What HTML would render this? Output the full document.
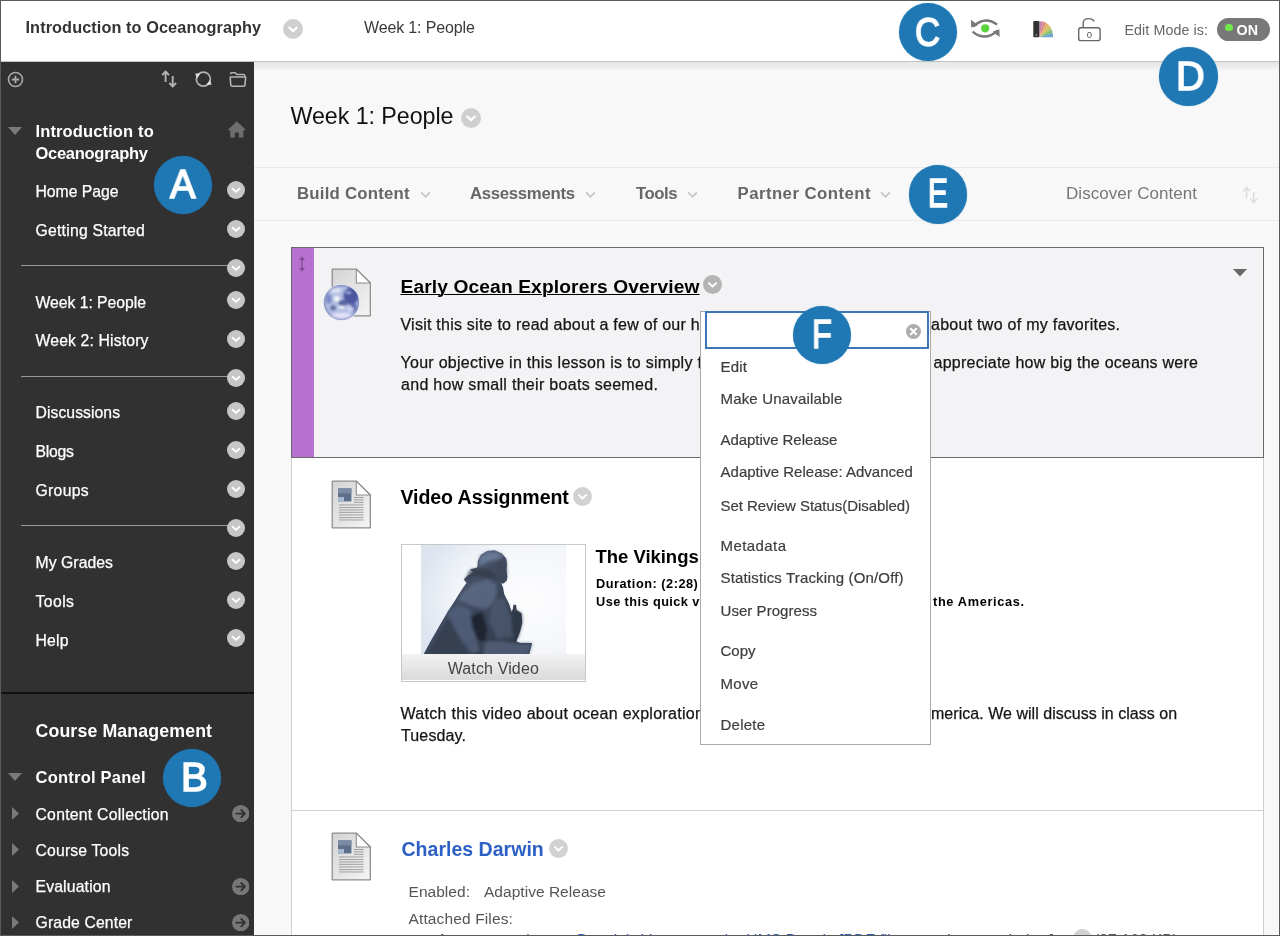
<!DOCTYPE html>
<html><head><meta charset="utf-8"><title>Week 1: People</title>
<style>
html,body{margin:0;padding:0;}
body{width:1280px;height:936px;position:relative;overflow:hidden;background:#f8f8f8;font-family:"Liberation Sans",sans-serif;}
.t{position:absolute;white-space:nowrap;line-height:1;z-index:1;}
#tx,#mx{position:absolute;left:0;top:0;width:1280px;height:936px;will-change:transform;}
#mx{z-index:6;}
.a{position:absolute;}
.chev{position:absolute;width:18px;height:18px;border-radius:50%;background:#c9c9c9;z-index:2;}
.chev svg,.arr svg{position:absolute;left:0;top:0;}
.arr{position:absolute;width:17px;height:17px;border-radius:50%;background:#777;z-index:2;}
.dot{position:absolute;width:58.4px;height:58.4px;border-radius:50%;background:#1f78b4;box-shadow:0 0 1.2px 0 rgba(31,120,180,.6);z-index:10;}
.dl{position:absolute;z-index:11;color:#fff;line-height:1;transform-origin:0 0;will-change:transform;}
</style></head><body>
<!-- top bar -->
<div class="a" style="left:0;top:0;width:1280px;height:61px;background:#fff;border-bottom:1px solid #c4c4c4;"></div>
<div class="a" style="left:254px;top:62px;width:1026px;height:8px;background:linear-gradient(#e6e6e6,#efefef 80%,#f8f8f8);"></div>
<!-- sidebar -->
<div class="a" style="left:0;top:62px;width:254px;height:874px;background:#323132;"></div>
<div class="a" style="left:0;top:692px;width:254px;height:2px;background:#111;"></div>
<div class="a" style="left:21px;top:265px;width:208px;height:1px;background:#9a9a9a;"></div>
<div class="a" style="left:21px;top:376px;width:208px;height:1px;background:#9a9a9a;"></div>
<div class="a" style="left:21px;top:525px;width:208px;height:1px;background:#9a9a9a;"></div>
<!-- action bar -->
<div class="a" style="left:254px;top:167px;width:1026px;height:1px;background:#e9e9e9;"></div>
<div class="a" style="left:254px;top:220px;width:1026px;height:1px;background:#e9e9e9;"></div>
<!-- content list -->
<div class="a" style="left:291px;top:458px;width:971px;height:478px;background:#fff;border-left:1px solid #cfcfcf;border-right:1px solid #cfcfcf;"></div>
<div class="a" style="left:292px;top:810px;width:971px;height:1px;background:#d0d0d0;"></div>
<div class="a" style="left:291px;top:247px;width:971px;height:209px;background:#f3f2f4;border:1px solid #6a6a6a;"></div>
<div class="a" style="left:292px;top:248px;width:22px;height:209px;background:#b770d0;"></div>
<!-- video box -->
<div class="a" style="left:401.3px;top:543.5px;width:182.4px;height:136px;background:#fff;border:1px solid #c8c8c8;"></div>
<div class="a" style="left:402.3px;top:653.8px;width:182.4px;height:26.7px;background:linear-gradient(#f2f2f2,#dadada);"></div>
<!-- menu -->
<div class="a" style="left:700px;top:311px;width:229px;height:432px;background:#fff;border:1px solid #a9a9a9;z-index:5;"></div>
<div class="a" style="left:705px;top:311.4px;width:219.5px;height:33.2px;border:2px solid #3d76b8;z-index:6;background:#fff;"></div>
<svg class="a" style="left:226.7px;top:180.6px;z-index:2" width="18" height="18" viewBox="0 0 18 18"><circle cx="9" cy="9" r="9" fill="#c6c6c6"/><path d="M5.6 7.7 L9 10.9 L12.4 7.7" fill="none" stroke="#fff" stroke-width="1.9" stroke-linecap="round" stroke-linejoin="round"/></svg>
<svg class="a" style="left:226.7px;top:219.6px;z-index:2" width="18" height="18" viewBox="0 0 18 18"><circle cx="9" cy="9" r="9" fill="#c6c6c6"/><path d="M5.6 7.7 L9 10.9 L12.4 7.7" fill="none" stroke="#fff" stroke-width="1.9" stroke-linecap="round" stroke-linejoin="round"/></svg>
<svg class="a" style="left:226.7px;top:258.5px;z-index:2" width="18" height="18" viewBox="0 0 18 18"><circle cx="9" cy="9" r="9" fill="#c6c6c6"/><path d="M5.6 7.7 L9 10.9 L12.4 7.7" fill="none" stroke="#fff" stroke-width="1.9" stroke-linecap="round" stroke-linejoin="round"/></svg>
<svg class="a" style="left:226.7px;top:291.0px;z-index:2" width="18" height="18" viewBox="0 0 18 18"><circle cx="9" cy="9" r="9" fill="#c6c6c6"/><path d="M5.6 7.7 L9 10.9 L12.4 7.7" fill="none" stroke="#fff" stroke-width="1.9" stroke-linecap="round" stroke-linejoin="round"/></svg>
<svg class="a" style="left:226.7px;top:330.0px;z-index:2" width="18" height="18" viewBox="0 0 18 18"><circle cx="9" cy="9" r="9" fill="#c6c6c6"/><path d="M5.6 7.7 L9 10.9 L12.4 7.7" fill="none" stroke="#fff" stroke-width="1.9" stroke-linecap="round" stroke-linejoin="round"/></svg>
<svg class="a" style="left:226.7px;top:369.0px;z-index:2" width="18" height="18" viewBox="0 0 18 18"><circle cx="9" cy="9" r="9" fill="#c6c6c6"/><path d="M5.6 7.7 L9 10.9 L12.4 7.7" fill="none" stroke="#fff" stroke-width="1.9" stroke-linecap="round" stroke-linejoin="round"/></svg>
<svg class="a" style="left:226.7px;top:402.0px;z-index:2" width="18" height="18" viewBox="0 0 18 18"><circle cx="9" cy="9" r="9" fill="#c6c6c6"/><path d="M5.6 7.7 L9 10.9 L12.4 7.7" fill="none" stroke="#fff" stroke-width="1.9" stroke-linecap="round" stroke-linejoin="round"/></svg>
<svg class="a" style="left:226.7px;top:441.0px;z-index:2" width="18" height="18" viewBox="0 0 18 18"><circle cx="9" cy="9" r="9" fill="#c6c6c6"/><path d="M5.6 7.7 L9 10.9 L12.4 7.7" fill="none" stroke="#fff" stroke-width="1.9" stroke-linecap="round" stroke-linejoin="round"/></svg>
<svg class="a" style="left:226.7px;top:479.7px;z-index:2" width="18" height="18" viewBox="0 0 18 18"><circle cx="9" cy="9" r="9" fill="#c6c6c6"/><path d="M5.6 7.7 L9 10.9 L12.4 7.7" fill="none" stroke="#fff" stroke-width="1.9" stroke-linecap="round" stroke-linejoin="round"/></svg>
<svg class="a" style="left:226.7px;top:518.5px;z-index:2" width="18" height="18" viewBox="0 0 18 18"><circle cx="9" cy="9" r="9" fill="#c6c6c6"/><path d="M5.6 7.7 L9 10.9 L12.4 7.7" fill="none" stroke="#fff" stroke-width="1.9" stroke-linecap="round" stroke-linejoin="round"/></svg>
<svg class="a" style="left:226.7px;top:551.5px;z-index:2" width="18" height="18" viewBox="0 0 18 18"><circle cx="9" cy="9" r="9" fill="#c6c6c6"/><path d="M5.6 7.7 L9 10.9 L12.4 7.7" fill="none" stroke="#fff" stroke-width="1.9" stroke-linecap="round" stroke-linejoin="round"/></svg>
<svg class="a" style="left:226.7px;top:590.5px;z-index:2" width="18" height="18" viewBox="0 0 18 18"><circle cx="9" cy="9" r="9" fill="#c6c6c6"/><path d="M5.6 7.7 L9 10.9 L12.4 7.7" fill="none" stroke="#fff" stroke-width="1.9" stroke-linecap="round" stroke-linejoin="round"/></svg>
<svg class="a" style="left:226.7px;top:629.3px;z-index:2" width="18" height="18" viewBox="0 0 18 18"><circle cx="9" cy="9" r="9" fill="#c6c6c6"/><path d="M5.6 7.7 L9 10.9 L12.4 7.7" fill="none" stroke="#fff" stroke-width="1.9" stroke-linecap="round" stroke-linejoin="round"/></svg>
<svg class="a" style="left:283.0px;top:19.0px;z-index:2" width="20" height="20" viewBox="0 0 18 18"><circle cx="9" cy="9" r="9" fill="#cfcfcf"/><path d="M5.6 7.7 L9 10.9 L12.4 7.7" fill="none" stroke="#fff" stroke-width="1.9" stroke-linecap="round" stroke-linejoin="round"/></svg>
<svg class="a" style="left:460.5px;top:107.8px;z-index:2" width="20" height="20" viewBox="0 0 18 18"><circle cx="9" cy="9" r="9" fill="#cfcfcf"/><path d="M5.6 7.7 L9 10.9 L12.4 7.7" fill="none" stroke="#fff" stroke-width="1.9" stroke-linecap="round" stroke-linejoin="round"/></svg>
<svg class="a" style="left:702.9px;top:275.2px;z-index:2" width="19.0" height="19.0" viewBox="0 0 18 18"><circle cx="9" cy="9" r="9" fill="#b4b4b4"/><path d="M5.6 7.7 L9 10.9 L12.4 7.7" fill="none" stroke="#fff" stroke-width="1.9" stroke-linecap="round" stroke-linejoin="round"/></svg>
<svg class="a" style="left:572.9px;top:486.5px;z-index:2" width="19.0" height="19.0" viewBox="0 0 18 18"><circle cx="9" cy="9" r="9" fill="#d2d2d2"/><path d="M5.6 7.7 L9 10.9 L12.4 7.7" fill="none" stroke="#fff" stroke-width="1.9" stroke-linecap="round" stroke-linejoin="round"/></svg>
<svg class="a" style="left:548.5px;top:839.0px;z-index:2" width="19.0" height="19.0" viewBox="0 0 18 18"><circle cx="9" cy="9" r="9" fill="#d2d2d2"/><path d="M5.6 7.7 L9 10.9 L12.4 7.7" fill="none" stroke="#fff" stroke-width="1.9" stroke-linecap="round" stroke-linejoin="round"/></svg>
<svg class="a" style="left:1072.5px;top:928.5px;z-index:2" width="19.0" height="19.0" viewBox="0 0 18 18"><circle cx="9" cy="9" r="9" fill="#d2d2d2"/><path d="M5.6 7.7 L9 10.9 L12.4 7.7" fill="none" stroke="#fff" stroke-width="1.9" stroke-linecap="round" stroke-linejoin="round"/></svg>
<svg class="a" style="left:231.9px;top:804.8px;z-index:2" width="17.4" height="17.4" viewBox="0 0 18 18"><circle cx="9" cy="9" r="9" fill="#777"/><path d="M4.5 9 H13 M9.6 5.2 L13.4 9 L9.6 12.8" fill="none" stroke="#323132" stroke-width="1.9" stroke-linecap="round" stroke-linejoin="round"/></svg>
<svg class="a" style="left:231.9px;top:877.8px;z-index:2" width="17.4" height="17.4" viewBox="0 0 18 18"><circle cx="9" cy="9" r="9" fill="#777"/><path d="M4.5 9 H13 M9.6 5.2 L13.4 9 L9.6 12.8" fill="none" stroke="#323132" stroke-width="1.9" stroke-linecap="round" stroke-linejoin="round"/></svg>
<svg class="a" style="left:231.9px;top:913.9px;z-index:2" width="17.4" height="17.4" viewBox="0 0 18 18"><circle cx="9" cy="9" r="9" fill="#777"/><path d="M4.5 9 H13 M9.6 5.2 L13.4 9 L9.6 12.8" fill="none" stroke="#323132" stroke-width="1.9" stroke-linecap="round" stroke-linejoin="round"/></svg>
<svg class="a" style="left:8px;top:127px" width="14" height="8" viewBox="0 0 14 8"><path d="M0 0 H14 L7.0 8 Z" fill="#7a7a7a"/></svg>
<svg class="a" style="left:8px;top:773px" width="14" height="8" viewBox="0 0 14 8"><path d="M0 0 H14 L7.0 8 Z" fill="#7a7a7a"/></svg>
<svg class="a" style="left:12px;top:806.8px" width="7" height="13" viewBox="0 0 7 13"><path d="M0 0 L7 6.5 L0 13 Z" fill="#7a7a7a"/></svg>
<svg class="a" style="left:12px;top:843.0px" width="7" height="13" viewBox="0 0 7 13"><path d="M0 0 L7 6.5 L0 13 Z" fill="#7a7a7a"/></svg>
<svg class="a" style="left:12px;top:879.5px" width="7" height="13" viewBox="0 0 7 13"><path d="M0 0 L7 6.5 L0 13 Z" fill="#7a7a7a"/></svg>
<svg class="a" style="left:12px;top:915.8px" width="7" height="13" viewBox="0 0 7 13"><path d="M0 0 L7 6.5 L0 13 Z" fill="#7a7a7a"/></svg>
<svg class="a" style="left:226.6px;top:120.2px" width="19.6" height="18.6" viewBox="0 0 21 19"><path d="M10.5 1 L20.5 10.5 H17.5 V18.4 H12.6 V13 H8.4 V18.4 H3.5 V10.5 H0.5 Z" fill="#6e6e6e"/></svg>
<svg class="a" style="left:7px;top:70.5px" width="17" height="17" viewBox="0 0 17 17"><circle cx="8.5" cy="8.5" r="7" fill="none" stroke="#a9a9a9" stroke-width="1.6"/><path d="M8.5 4.8 V12.2 M4.8 8.5 H12.2" stroke="#a9a9a9" stroke-width="1.8"/></svg>
<svg class="a" style="left:160.6px;top:69.5px" width="17" height="18" viewBox="0 0 17 18"><path d="M4.6 12 V2.2 M1.2 5.2 L4.6 1.4 L8 5.2" fill="none" stroke="#b4b4b4" stroke-width="1.9" stroke-linejoin="round"/><path d="M11.7 6 V15.8 M8.3 12.8 L11.7 16.6 L15.1 12.8" fill="none" stroke="#b4b4b4" stroke-width="1.9" stroke-linejoin="round"/></svg>
<svg class="a" style="left:194px;top:70px" width="19" height="19" viewBox="0 0 19 19"><circle cx="9.4" cy="9.2" r="7" fill="none" stroke="#b4b4b4" stroke-width="1.7"/><path d="M1.2 3.6 L6.4 3.6 L3 8.4 Z M17.6 14.8 L12.4 14.8 L15.8 10 Z" fill="#e0e0e0"/></svg>
<svg class="a" style="left:229px;top:71px" width="18" height="17" viewBox="0 0 18 17"><path d="M1.5 3.2 Q1.5 1.8 2.8 1.8 H6.2 L7.8 3.6 H14.5 Q15.8 3.6 15.8 4.9 V6" fill="none" stroke="#b4b4b4" stroke-width="1.5"/><path d="M1.6 6 H16.2 Q16.8 6 16.7 6.7 L15.9 14.2 Q15.8 15.3 14.7 15.3 H3 Q1.9 15.3 1.8 14.2 L1.2 6.7 Q1.1 6 1.6 6 Z" fill="none" stroke="#b4b4b4" stroke-width="1.6"/></svg>
<svg class="a" style="left:970px;top:17px" width="31" height="23" viewBox="0 0 31 23"><path d="M3.2 9.5 Q15 -1.5 27.2 7.6" fill="none" stroke="#777" stroke-width="2.4"/><path d="M1 2.8 L1.2 10.6 L8 8.2 Z" fill="#777"/><path d="M2.6 14.6 Q15 25 27.6 13.6" fill="none" stroke="#777" stroke-width="2.4"/><path d="M29.6 20 L29.4 12.2 L22.6 14.8 Z" fill="#777"/><circle cx="15.2" cy="11.3" r="4.1" fill="#5bd23f"/></svg>
<svg class="a" style="left:1032px;top:20px" width="21" height="19" viewBox="0 0 21 19"><g transform="translate(1.3,17.2)"><path d="M6 0 L6 -16 A16 16 0 0 1 9.5 -15.6 Z" fill="#c77fb0"/><path d="M6 0 L9.5 -15.6 A16 16 0 0 1 13 -14.2 Z" fill="#d98a8a"/><path d="M6 0 L13 -14.2 A16 16 0 0 1 16 -11.6 Z" fill="#e8b266"/><path d="M6 0 L16 -11.6 A16 16 0 0 1 18.2 -8 Z" fill="#c9c46a"/><path d="M6 0 L18.2 -8 A16 16 0 0 1 19.4 -4 Z" fill="#7fbf7b"/><path d="M6 0 L19.4 -4 A16 16 0 0 1 19.8 0 Z" fill="#6aa7d8"/><rect x="0" y="-16.2" width="6" height="16.2" rx="0.8" fill="#333"/><circle cx="3" cy="-2.4" r="0.9" fill="#999"/></g></svg>
<svg class="a" style="left:1077px;top:16px;will-change:transform" width="25" height="26" viewBox="0 0 25 26"><rect x="1.7" y="11.8" width="21.4" height="12.8" rx="2.2" fill="#fff" stroke="#666" stroke-width="1.4"/><path d="M6.2 11.8 V7.4 Q6.2 2.6 11.5 2.6 Q15.6 2.6 17.2 5.4" fill="none" stroke="#666" stroke-width="1.4"/><text x="12.4" y="21.6" font-family="Liberation Sans, sans-serif" font-size="9.5" fill="#555" text-anchor="middle">0</text></svg>
<div class="a" style="left:1217px;top:18px;width:53px;height:23px;border-radius:12px;background:#787878;"></div><div class="a" style="left:1225.3px;top:23.6px;width:7.6px;height:7.6px;border-radius:50%;background:#6fe84a;z-index:1"></div>
<svg class="a" style="left:419.5px;top:190.5px" width="11" height="8" viewBox="0 0 11 8"><path d="M1.2 1.4 L5.5 5.8 L9.8 1.4" fill="none" stroke="#c4c4c4" stroke-width="1.6"/></svg>
<svg class="a" style="left:584.5px;top:190.5px" width="11" height="8" viewBox="0 0 11 8"><path d="M1.2 1.4 L5.5 5.8 L9.8 1.4" fill="none" stroke="#c4c4c4" stroke-width="1.6"/></svg>
<svg class="a" style="left:686.5px;top:190.5px" width="11" height="8" viewBox="0 0 11 8"><path d="M1.2 1.4 L5.5 5.8 L9.8 1.4" fill="none" stroke="#c4c4c4" stroke-width="1.6"/></svg>
<svg class="a" style="left:879.5px;top:190.5px" width="11" height="8" viewBox="0 0 11 8"><path d="M1.2 1.4 L5.5 5.8 L9.8 1.4" fill="none" stroke="#c4c4c4" stroke-width="1.6"/></svg>
<svg class="a" style="left:1242px;top:185.5px" width="17" height="18" viewBox="0 0 17 18"><path d="M4.6 12 V2.2 M1.2 5.2 L4.6 1.4 L8 5.2" fill="none" stroke="#dcdcdc" stroke-width="1.5" stroke-linejoin="round"/><path d="M11.7 6 V15.8 M8.3 12.8 L11.7 16.6 L15.1 12.8" fill="none" stroke="#dcdcdc" stroke-width="1.5" stroke-linejoin="round"/></svg>
<svg class="a" style="left:298px;top:256px" width="8" height="16" viewBox="0 0 8 16"><path d="M4 2 V14" stroke="#7d4b90" stroke-width="1.3"/><path d="M1 4 L4 0.6 L7 4 Z M1 12 L4 15.4 L7 12 Z" fill="#7d4b90"/></svg>
<svg class="a" style="left:1233px;top:269px" width="14" height="8" viewBox="0 0 14 8"><path d="M0 0 H14 L7 7.5 Z" fill="#666"/></svg>
<svg class="a" style="left:905.8px;top:323.5px;z-index:7" width="15" height="15" viewBox="0 0 15 15"><circle cx="7.5" cy="7.5" r="7.5" fill="#adadad"/><path d="M4.8 4.8 L10.2 10.2 M10.2 4.8 L4.8 10.2" stroke="#fff" stroke-width="2" stroke-linecap="round"/></svg>
<svg class="a" style="left:331.2px;top:268px" width="41" height="50" viewBox="0 0 41 50"><defs><linearGradient id="dg268" x1="0" y1="0" x2="1" y2="1"><stop offset="0" stop-color="#d4d4d4"/><stop offset="1" stop-color="#f4f4f4"/></linearGradient></defs><path d="M1.2 1.2 H25.3 L39.3 15 V47.8 H1.2 Z" fill="url(#dg268)" stroke="#8c8c8c" stroke-width="1.25" stroke-linejoin="round"/><path d="M25.3 1.2 V15 H39.3 Z" fill="#fff" stroke="#8c8c8c" stroke-width="1.1" stroke-linejoin="round"/></svg>
<svg class="a" style="left:331.2px;top:479.6px" width="41" height="50" viewBox="0 0 41 50"><defs><linearGradient id="dg479" x1="0" y1="0" x2="1" y2="1"><stop offset="0" stop-color="#d4d4d4"/><stop offset="1" stop-color="#f4f4f4"/></linearGradient></defs><path d="M1.2 1.2 H25.3 L39.3 15 V47.8 H1.2 Z" fill="url(#dg479)" stroke="#8c8c8c" stroke-width="1.25" stroke-linejoin="round"/><path d="M25.3 1.2 V15 H39.3 Z" fill="#fff" stroke="#8c8c8c" stroke-width="1.1" stroke-linejoin="round"/><rect x="7" y="8.4" width="13.4" height="13" fill="#5e6f8c"/><rect x="7" y="8.4" width="13.4" height="5" fill="#7c8aa3"/><rect x="7" y="17" width="6" height="4.4" fill="#a9bad3"/><rect x="23" y="17" width="9.5" height="1" fill="#9c9c9c"/><rect x="23" y="19.4" width="9.5" height="1" fill="#9c9c9c"/><rect x="23" y="21.8" width="9.5" height="1" fill="#9c9c9c"/><rect x="8" y="24.4" width="24.5" height="1.1" fill="#a6a6a6"/><rect x="8" y="27" width="24.5" height="1.1" fill="#a6a6a6"/><rect x="8" y="29.4" width="24.5" height="1.1" fill="#a6a6a6"/><rect x="8" y="31.8" width="24.5" height="1.1" fill="#a6a6a6"/><rect x="8" y="34.4" width="24.5" height="1.1" fill="#a6a6a6"/><rect x="8" y="37" width="24.5" height="1.1" fill="#a6a6a6"/><rect x="8" y="39.4" width="24.5" height="1.1" fill="#a6a6a6"/></svg>
<svg class="a" style="left:331.2px;top:832.3px" width="41" height="50" viewBox="0 0 41 50"><defs><linearGradient id="dg832" x1="0" y1="0" x2="1" y2="1"><stop offset="0" stop-color="#d4d4d4"/><stop offset="1" stop-color="#f4f4f4"/></linearGradient></defs><path d="M1.2 1.2 H25.3 L39.3 15 V47.8 H1.2 Z" fill="url(#dg832)" stroke="#8c8c8c" stroke-width="1.25" stroke-linejoin="round"/><path d="M25.3 1.2 V15 H39.3 Z" fill="#fff" stroke="#8c8c8c" stroke-width="1.1" stroke-linejoin="round"/><rect x="7" y="8.4" width="13.4" height="13" fill="#5e6f8c"/><rect x="7" y="8.4" width="13.4" height="5" fill="#7c8aa3"/><rect x="7" y="17" width="6" height="4.4" fill="#a9bad3"/><rect x="23" y="17" width="9.5" height="1" fill="#9c9c9c"/><rect x="23" y="19.4" width="9.5" height="1" fill="#9c9c9c"/><rect x="23" y="21.8" width="9.5" height="1" fill="#9c9c9c"/><rect x="8" y="24.4" width="24.5" height="1.1" fill="#a6a6a6"/><rect x="8" y="27" width="24.5" height="1.1" fill="#a6a6a6"/><rect x="8" y="29.4" width="24.5" height="1.1" fill="#a6a6a6"/><rect x="8" y="31.8" width="24.5" height="1.1" fill="#a6a6a6"/><rect x="8" y="34.4" width="24.5" height="1.1" fill="#a6a6a6"/><rect x="8" y="37" width="24.5" height="1.1" fill="#a6a6a6"/><rect x="8" y="39.4" width="24.5" height="1.1" fill="#a6a6a6"/></svg>
<svg class="a" style="left:322.7px;top:284.2px" width="36.9" height="37.1" viewBox="95 85 750 755"><defs><filter id="gf" x="-30%" y="-30%" width="160%" height="160%"><feGaussianBlur stdDeviation="22"/></filter><filter id="gf2"><feGaussianBlur stdDeviation="6"/></filter><clipPath id="gc"><circle cx="470" cy="462" r="362"/></clipPath><radialGradient id="gr" cx=".5" cy=".5" r=".5"><stop offset=".8" stop-color="#5a66a0" stop-opacity="0"/><stop offset="1" stop-color="#4f5b98" stop-opacity=".45"/></radialGradient></defs>
<circle cx="470" cy="462" r="372" fill="#e9ecf7" filter="url(#gf2)"/>
<circle cx="470" cy="462" r="360" fill="#b2bee2" filter="url(#gf2)"/>
<g clip-path="url(#gc)"><g filter="url(#gf)">
<ellipse cx="665" cy="330" rx="155" ry="175" fill="#4b589f"/>
<ellipse cx="500" cy="470" rx="90" ry="60" fill="#59659f"/>
<ellipse cx="215" cy="390" rx="60" ry="100" fill="#7d8dc6"/>
<ellipse cx="300" cy="570" rx="60" ry="55" fill="#6474a6"/>
<ellipse cx="720" cy="560" rx="60" ry="90" fill="#5f6cae"/>
<ellipse cx="340" cy="210" rx="120" ry="60" fill="#d9e0f0"/>
<ellipse cx="375" cy="385" rx="60" ry="55" fill="#f5f6f7"/>
<ellipse cx="470" cy="562" rx="65" ry="24" fill="#ffffff"/>
<ellipse cx="650" cy="595" rx="70" ry="40" fill="#cfd7f2"/>
<ellipse cx="470" cy="745" rx="230" ry="75" fill="#e0e1f8"/>
<ellipse cx="610" cy="260" rx="60" ry="22" fill="#aebbe6"/>
</g><circle cx="470" cy="462" r="362" fill="url(#gr)"/></g></svg>
<svg class="a" style="left:420.7px;top:544.5px" width="145.3" height="109.5" viewBox="22 22 1183 886" preserveAspectRatio="none"><defs><radialGradient id="vb" cx="0.75" cy="0.5" r="0.8"><stop offset="0" stop-color="#fdfdfe"/><stop offset=".6" stop-color="#f4f6fa"/><stop offset="1" stop-color="#dde4ef"/></radialGradient><linearGradient id="vs" x1="0" y1="0" x2="1" y2="1"><stop offset="0" stop-color="#56647e"/><stop offset=".5" stop-color="#3e495d"/><stop offset="1" stop-color="#2b3343"/></linearGradient><filter id="vf" x="-5%" y="-5%" width="110%" height="110%"><feGaussianBlur stdDeviation="4"/></filter><filter id="vf2" x="-20%" y="-20%" width="140%" height="140%"><feGaussianBlur stdDeviation="11"/></filter><clipPath id="vc"><rect x="22" y="22" width="1183" height="886"/></clipPath></defs><rect x="22" y="22" width="1183" height="886" fill="url(#vb)"/><g clip-path="url(#vc)"><g filter="url(#vf)">
<path d="M30 930 L100 800 L170 680 L240 560 L300 470 L330 420 L370 360 L392 330 L370 300 L400 270 L450 245 L420 220 L480 205 L485 150 L510 100 L560 70 L620 64 L680 90 L715 130 L722 180 L718 230 L726 280 L720 312 L690 336 L675 330 L690 365 L700 420 L712 445 L740 500 L760 562 L770 540 L775 505 L796 505 L801 550 L840 575 L846 650 L830 720 L810 770 L800 802 L830 815 L926 815 L890 960 L20 960 Z" fill="url(#vs)"/></g>
<g filter="url(#vf2)">
<path d="M350 420 L450 330 L560 300 L640 340 L630 450 L560 540 L450 520 L330 470Z" fill="#62718c" opacity=".7"/>
<path d="M240 570 L320 505 L420 540 L440 640 L470 760 L500 880 L430 900 L330 760 L250 650Z" fill="#566480" opacity=".7"/>
<path d="M425 600 L520 560 L560 700 L545 800 L480 790 L440 690Z" fill="#1f2430" opacity=".95"/>
<path d="M500 115 L560 78 L640 76 L700 110 L640 140 L560 160 L492 195Z" fill="#6c7c98" opacity=".9"/>
<path d="M640 150 L715 135 L722 250 L700 320 L655 290 L625 200Z" fill="#3d475a" opacity=".8"/>
<path d="M420 225 L500 210 L600 230 L640 290 L560 290 L470 270 L380 310Z" fill="#333b4b" opacity=".8"/>
<path d="M540 810 L640 795 L830 818 L926 818 L880 960 L520 960Z" fill="#525f78" opacity=".85"/>
<path d="M40 960 L250 600 L330 770 L440 960Z" fill="#353e50" opacity=".8"/>
<path d="M760 560 L800 550 L842 580 L845 650 L812 770 L790 790 L770 700Z" fill="#2f3747" opacity=".9"/>
<path d="M600 470 L700 450 L750 600 L770 770 L640 780 L580 640Z" fill="#4e5b74" opacity=".7"/>
</g></g></svg>
<div id="tx">
<span class="t" style="left:25.5px;top:19.1px;font-size:16.25px;font-weight:bold;color:#333;letter-spacing:0.10px;">Introduction to Oceanography</span>
<span class="t" style="left:364.0px;top:19.8px;font-size:16.00px;font-weight:normal;color:#3a3a3a;letter-spacing:-0.14px;">Week 1: People</span>
<span class="t" style="left:1124.5px;top:23.0px;font-size:14.25px;font-weight:normal;color:#666;letter-spacing:0.09px;">Edit Mode is:</span>
<span class="t" style="left:1236.5px;top:23.0px;font-size:14.25px;font-weight:bold;color:#fff;letter-spacing:0.12px;">ON</span>
<span class="t" style="left:35.5px;top:123.0px;font-size:16.50px;font-weight:bold;color:#fff;letter-spacing:0.13px;">Introduction to</span>
<span class="t" style="left:35.5px;top:145.0px;font-size:16.50px;font-weight:bold;color:#fff;letter-spacing:-0.28px;">Oceanography</span>
<span class="t" style="left:35.5px;top:183.5px;font-size:15.75px;font-weight:normal;color:#fff;letter-spacing:-0.02px;-webkit-text-stroke:0.25px #fff;">Home Page</span>
<span class="t" style="left:35.5px;top:222.5px;font-size:15.75px;font-weight:normal;color:#fff;letter-spacing:0.23px;-webkit-text-stroke:0.25px #fff;">Getting Started</span>
<span class="t" style="left:35.5px;top:294.5px;font-size:15.75px;font-weight:normal;color:#fff;letter-spacing:-0.03px;-webkit-text-stroke:0.25px #fff;">Week 1: People</span>
<span class="t" style="left:35.5px;top:333.0px;font-size:15.75px;font-weight:normal;color:#fff;letter-spacing:0.15px;-webkit-text-stroke:0.25px #fff;">Week 2: History</span>
<span class="t" style="left:35.5px;top:405.0px;font-size:15.75px;font-weight:normal;color:#fff;letter-spacing:0.05px;-webkit-text-stroke:0.25px #fff;">Discussions</span>
<span class="t" style="left:35.5px;top:444.0px;font-size:15.75px;font-weight:normal;color:#fff;letter-spacing:-0.23px;-webkit-text-stroke:0.25px #fff;">Blogs</span>
<span class="t" style="left:35.5px;top:483.0px;font-size:15.75px;font-weight:normal;color:#fff;letter-spacing:0.31px;-webkit-text-stroke:0.25px #fff;">Groups</span>
<span class="t" style="left:35.5px;top:554.5px;font-size:15.75px;font-weight:normal;color:#fff;letter-spacing:0.06px;-webkit-text-stroke:0.25px #fff;">My Grades</span>
<span class="t" style="left:35.5px;top:593.7px;font-size:15.75px;font-weight:normal;color:#fff;letter-spacing:0.43px;-webkit-text-stroke:0.25px #fff;">Tools</span>
<span class="t" style="left:35.5px;top:632.7px;font-size:15.75px;font-weight:normal;color:#fff;letter-spacing:0.20px;-webkit-text-stroke:0.25px #fff;">Help</span>
<span class="t" style="left:35.5px;top:806.5px;font-size:15.75px;font-weight:normal;color:#fff;letter-spacing:0.25px;-webkit-text-stroke:0.25px #fff;">Content Collection</span>
<span class="t" style="left:35.5px;top:842.6px;font-size:15.75px;font-weight:normal;color:#fff;letter-spacing:0.17px;-webkit-text-stroke:0.25px #fff;">Course Tools</span>
<span class="t" style="left:35.5px;top:879.0px;font-size:15.75px;font-weight:normal;color:#fff;letter-spacing:0.16px;-webkit-text-stroke:0.25px #fff;">Evaluation</span>
<span class="t" style="left:35.5px;top:915.4px;font-size:15.75px;font-weight:normal;color:#fff;letter-spacing:0.13px;-webkit-text-stroke:0.25px #fff;">Grade Center</span>
<span class="t" style="left:35.5px;top:722.6px;font-size:17.75px;font-weight:bold;color:#fff;letter-spacing:0.12px;">Course Management</span>
<span class="t" style="left:35.5px;top:768.6px;font-size:16.50px;font-weight:bold;color:#fff;letter-spacing:0.23px;">Control Panel</span>
<span class="t" style="left:290.5px;top:105.4px;font-size:23.25px;font-weight:normal;color:#111;letter-spacing:-0.06px;">Week 1: People</span>
<span class="t" style="left:297.0px;top:186.0px;font-size:16.75px;font-weight:bold;color:#666;letter-spacing:0.24px;">Build Content</span>
<span class="t" style="left:470.0px;top:186.0px;font-size:16.75px;font-weight:bold;color:#666;letter-spacing:-0.30px;">Assessments</span>
<span class="t" style="left:636.0px;top:186.0px;font-size:16.75px;font-weight:bold;color:#666;letter-spacing:-0.46px;">Tools</span>
<span class="t" style="left:737.5px;top:186.0px;font-size:16.75px;font-weight:bold;color:#666;letter-spacing:0.46px;">Partner Content</span>
<span class="t" style="left:1066.0px;top:185.0px;font-size:17.00px;font-weight:normal;color:#777;letter-spacing:0.04px;">Discover Content</span>
<span class="t" style="left:400.5px;top:276.8px;font-size:19.20px;font-weight:bold;color:#000;letter-spacing:0.12px;text-decoration:underline;text-decoration-thickness:1.2px;text-underline-offset:0.6px;">Early Ocean Explorers Overview</span>
<span class="t" style="left:400.5px;top:317.3px;font-size:16.00px;font-weight:normal;color:#151515;letter-spacing:0.24px;-webkit-text-stroke:0.25px #151515;">Visit this site to read about a few of our h</span>
<span class="t" style="left:931.0px;top:317.3px;font-size:16.00px;font-weight:normal;color:#151515;letter-spacing:0.27px;-webkit-text-stroke:0.25px #151515;">about two of my favorites.</span>
<span class="t" style="left:400.5px;top:355.3px;font-size:16.00px;font-weight:normal;color:#151515;letter-spacing:0.28px;-webkit-text-stroke:0.25px #151515;">Your objective in this lesson is to simply f</span>
<span class="t" style="left:933.5px;top:355.3px;font-size:16.00px;font-weight:normal;color:#151515;letter-spacing:0.25px;-webkit-text-stroke:0.25px #151515;">appreciate how big the oceans were</span>
<span class="t" style="left:401.0px;top:376.5px;font-size:16.00px;font-weight:normal;color:#151515;letter-spacing:0.30px;-webkit-text-stroke:0.25px #151515;">and how small their boats seemed.</span>
<span class="t" style="left:400.5px;top:488.3px;font-size:19.60px;font-weight:bold;color:#000;letter-spacing:-0.10px;">Video Assignment</span>
<span class="t" style="left:595.5px;top:547.5px;font-size:18.50px;font-weight:bold;color:#000;letter-spacing:-0.03px;">The Vikings</span>
<span class="t" style="left:596.0px;top:578.0px;font-size:12.75px;font-weight:bold;color:#000;letter-spacing:0.51px;">Duration: (2:28)</span>
<span class="t" style="left:596.0px;top:596.1px;font-size:12.75px;font-weight:bold;color:#000;letter-spacing:0.42px;">Use this quick v</span>
<span class="t" style="left:933.0px;top:596.1px;font-size:12.75px;font-weight:bold;color:#000;letter-spacing:0.65px;">the Americas.</span>
<span class="t" style="left:400.5px;top:705.8px;font-size:16.00px;font-weight:normal;color:#151515;letter-spacing:0.29px;-webkit-text-stroke:0.25px #151515;">Watch this video about ocean exploration</span>
<span class="t" style="left:931.0px;top:705.8px;font-size:16.00px;font-weight:normal;color:#151515;letter-spacing:0.03px;-webkit-text-stroke:0.25px #151515;">merica. We will discuss in class on</span>
<span class="t" style="left:401.0px;top:728.0px;font-size:16.00px;font-weight:normal;color:#151515;letter-spacing:0.14px;-webkit-text-stroke:0.25px #151515;">Tuesday.</span>
<span class="t" style="left:447.7px;top:660.7px;font-size:16.00px;font-weight:normal;color:#444;letter-spacing:0.13px;">Watch Video</span>
<span class="t" style="left:401.5px;top:840.3px;font-size:19.50px;font-weight:bold;color:#2d60c4;letter-spacing:0.02px;">Charles Darwin</span>
<span class="t" style="left:408.5px;top:884.0px;font-size:15.50px;font-weight:normal;color:#555;letter-spacing:0.04px;">Enabled:</span>
<span class="t" style="left:484.0px;top:884.0px;font-size:15.50px;font-weight:normal;color:#555;letter-spacing:0.03px;">Adaptive Release</span>
<span class="t" style="left:408.5px;top:910.5px;font-size:15.50px;font-weight:normal;color:#555;letter-spacing:0.13px;">Attached Files:</span>
<span class="t" style="left:437.0px;top:932.5px;font-size:15.75px;font-weight:normal;color:#555;letter-spacing:0.00px;">A passage where</span>
<span class="t" style="left:577.0px;top:932.5px;font-size:15.75px;font-weight:normal;color:#2b5fb8;letter-spacing:0.00px;">Darwin's Voyage on the HMS Beagle [PDF file</span>
<span class="t" style="left:900.0px;top:932.5px;font-size:15.75px;font-weight:normal;color:#555;letter-spacing:0.00px;">opens in new window]</span>
<span class="t" style="left:1094.0px;top:932.5px;font-size:15.75px;font-weight:normal;color:#555;letter-spacing:0.00px;">(87.163 KB)</span>
</div>
<div id="mx">
<span class="t" style="left:720.5px;top:358.5px;font-size:15.00px;font-weight:normal;color:#3d3d3d;letter-spacing:0.21px;z-index:6;-webkit-text-stroke:0.2px #3d3d3d;">Edit</span>
<span class="t" style="left:720.5px;top:391.0px;font-size:15.00px;font-weight:normal;color:#3d3d3d;letter-spacing:0.17px;z-index:6;-webkit-text-stroke:0.2px #3d3d3d;">Make Unavailable</span>
<span class="t" style="left:720.5px;top:431.6px;font-size:15.00px;font-weight:normal;color:#3d3d3d;letter-spacing:-0.05px;z-index:6;-webkit-text-stroke:0.2px #3d3d3d;">Adaptive Release</span>
<span class="t" style="left:720.5px;top:464.4px;font-size:15.00px;font-weight:normal;color:#3d3d3d;letter-spacing:0.02px;z-index:6;-webkit-text-stroke:0.2px #3d3d3d;">Adaptive Release: Advanced</span>
<span class="t" style="left:720.5px;top:497.5px;font-size:15.00px;font-weight:normal;color:#3d3d3d;letter-spacing:-0.05px;z-index:6;-webkit-text-stroke:0.2px #3d3d3d;">Set Review Status(Disabled)</span>
<span class="t" style="left:720.5px;top:537.8px;font-size:15.00px;font-weight:normal;color:#3d3d3d;letter-spacing:0.42px;z-index:6;-webkit-text-stroke:0.2px #3d3d3d;">Metadata</span>
<span class="t" style="left:720.5px;top:570.3px;font-size:15.00px;font-weight:normal;color:#3d3d3d;letter-spacing:0.15px;z-index:6;-webkit-text-stroke:0.2px #3d3d3d;">Statistics Tracking (On/Off)</span>
<span class="t" style="left:720.5px;top:603.0px;font-size:15.00px;font-weight:normal;color:#3d3d3d;letter-spacing:0.05px;z-index:6;-webkit-text-stroke:0.2px #3d3d3d;">User Progress</span>
<span class="t" style="left:720.5px;top:643.4px;font-size:15.00px;font-weight:normal;color:#3d3d3d;letter-spacing:0.02px;z-index:6;-webkit-text-stroke:0.2px #3d3d3d;">Copy</span>
<span class="t" style="left:720.5px;top:676.0px;font-size:15.00px;font-weight:normal;color:#3d3d3d;letter-spacing:0.27px;z-index:6;-webkit-text-stroke:0.2px #3d3d3d;">Move</span>
<span class="t" style="left:720.5px;top:716.5px;font-size:15.00px;font-weight:normal;color:#3d3d3d;letter-spacing:0.23px;z-index:6;-webkit-text-stroke:0.2px #3d3d3d;">Delete</span>
</div>
<!-- callouts -->
<div class="dot" style="left:154.0px;top:155.9px;"></div><span class="dl" style="left:170.0px;top:164.3px;font-size:40px;-webkit-text-stroke:1.6px #fff;transform:scale(0.955,1.013);">A</span>
<div class="dot" style="left:163.0px;top:749.1px;"></div><span class="dl" style="left:180.6px;top:756.0px;font-size:40px;-webkit-text-stroke:1.6px #fff;transform:scale(1.000,1.030);">B</span>
<div class="dot" style="left:899.1px;top:2.9px;"></div><span class="dl" style="left:914.9px;top:10.7px;font-size:40px;-webkit-text-stroke:1.6px #fff;transform:scale(0.867,1.030);">C</span>
<div class="dot" style="left:1159.2px;top:47.4px;"></div><span class="dl" style="left:1175.6px;top:55.0px;font-size:40px;-webkit-text-stroke:1.6px #fff;transform:scale(0.992,1.017);">D</span>
<div class="dot" style="left:909.0px;top:165.4px;"></div><span class="dl" style="left:927.9px;top:172.1px;font-size:40px;-webkit-text-stroke:1.6px #fff;transform:scale(0.746,1.027);">E</span>
<div class="dot" style="left:792.8px;top:305.9px;"></div><span class="dl" style="left:811.5px;top:313.0px;font-size:40px;-webkit-text-stroke:1.6px #fff;transform:scale(0.809,1.027);">F</span>
<!-- frame -->
<div class="a" style="left:0;top:0;width:1278px;height:934px;border:1px solid #5a5a5a;z-index:20;"></div>
</body></html>
